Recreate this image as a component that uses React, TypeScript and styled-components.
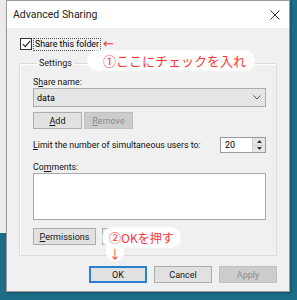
import React from "react";
import styled, { createGlobalStyle, css } from "styled-components";

const Global = createGlobalStyle`
  html, body { margin: 0; padding: 0; }
  body {
    width: 297px;
    height: 300px;
    overflow: hidden;
    font-family: Roboto, "Noto Sans", "Liberation Sans", sans-serif;
    color: #000;
  }
`;

const Desktop = styled.div`
  position: relative;
  width: 297px;
  height: 300px;
  box-sizing: border-box;
  padding-left: 6px;
  background: linear-gradient(#ebebeb, #ebebeb) no-repeat 0 0 / 6px 233px, #1d6c88;
`;

const Dialog = styled.div`
  width: 284px;
  height: 292px;
  box-sizing: border-box;
  border: 1px solid #9c9c9c;
  background: #f0f0f0;
  display: flex;
  flex-direction: column;
  box-shadow: 1px 1px 2px rgba(0, 0, 0, 0.3);
`;

const TitleBar = styled.div`
  height: 27px;
  flex: none;
  background: #fff;
  display: flex;
  align-items: center;
  justify-content: space-between;
  padding-left: 6px;
`;

const Title = styled.span`
  font-size: 10.5px;
  color: #222;
`;

const Close = styled.div`
  width: 24px;
  height: 27px;
  display: flex;
  align-items: center;
  justify-content: center;
  margin-right: 2px;
`;

const Body = styled.div`
  flex: 1;
  display: flex;
  flex-direction: column;
  padding: 10px 12px 0 12px;
`;

const CheckRow = styled.label`
  display: flex;
  align-items: center;
  height: 12px;
  margin-left: 1px;
  font-size: 8.8px;
`;

const CheckBox = styled.span`
  width: 10px;
  height: 10px;
  border: 1px solid #333;
  background: #fff;
  display: flex;
  align-items: center;
  justify-content: center;
`;

const FocusText = styled.span`
  border: 1px dotted #555;
  padding: 0 1px;
  line-height: 11px;
  margin-left: 1px;
`;

const Group = styled.fieldset`
  margin: 7px 0 0 0;
  padding: 7px 10px 10px 13px;
  border: 1px solid #dcdcdc;
  box-shadow: inset 1px 1px 0 #fff;
  min-width: 0;
  display: flex;
  flex-direction: column;
`;

const Legend = styled.legend`
  font-size: 9px;
  line-height: 12px;
  padding: 0 2px;
  margin-left: 4px;
  color: #222;
`;

const Label = styled.div<{ $mt?: number; $h?: number }>`
  font-size: 8.8px;
  line-height: ${(p) => p.$h ?? 12}px;
  height: ${(p) => p.$h ?? 12}px;
  margin-top: ${(p) => p.$mt ?? 0}px;
  color: #111;
  white-space: nowrap;
`;

const U = styled.span`
  text-decoration: underline;
  text-underline-offset: 1px;
`;

const Combo = styled.div`
  height: 19px;
  box-sizing: border-box;
  border: 1px solid #adadad;
  background: #e5e5e5;
  display: flex;
  align-items: center;
  justify-content: space-between;
  padding: 0 4px 0 3px;
  font-size: 9px;
`;

const Row = styled.div<{ $mt: number; $gap?: number }>`
  display: flex;
  align-items: center;
  gap: ${(p) => p.$gap ?? 2}px;
  margin-top: ${(p) => p.$mt}px;
`;

const Button = styled.div<{ $w: number; $disabled?: boolean; $default?: boolean }>`
  width: ${(p) => p.$w}px;
  height: 17px;
  box-sizing: border-box;
  border: 1px solid #adadad;
  background: #e1e1e1;
  font-size: 9px;
  display: flex;
  align-items: center;
  justify-content: center;
  color: #111;
  ${(p) =>
    p.$disabled &&
    css`
      background: #cccccc;
      border-color: #bfbfbf;
      color: #8c8c8c;
    `}
  ${(p) =>
    p.$default &&
    css`
      border: 2px solid #2a7fd4;
    `}
`;

const LimitRow = styled.div`
  display: flex;
  align-items: center;
  justify-content: space-between;
  margin-top: 8px;
  height: 16px;
`;

const Spin = styled.div`
  width: 46px;
  height: 16px;
  box-sizing: border-box;
  border: 1px solid #9a9a9a;
  background: #fff;
  display: flex;
`;

const SpinValue = styled.div`
  flex: 1;
  font-size: 9px;
  line-height: 14px;
  padding-left: 4px;
`;

const SpinButtons = styled.div`
  width: 12px;
  border-left: 1px solid #d0d0d0;
  display: flex;
  flex-direction: column;
  background: #e6e6e6;
`;

const SpinHalf = styled.div`
  flex: 1;
  display: flex;
  align-items: center;
  justify-content: center;
  & + & {
    border-top: 1px solid #cfcfcf;
  }
`;

const TextArea = styled.div`
  height: 47px;
  box-sizing: border-box;
  border: 1px solid #a8a8a8;
  background: #fff;
`;

const Footer = styled.div`
  display: flex;
  justify-content: flex-end;
  gap: 7px;
  margin-top: 10px;
`;

const Bubble = styled.div<{ $x: number; $y: number }>`
  position: absolute;
  left: ${(p) => p.$x}px;
  top: ${(p) => p.$y}px;
  font-family: "Noto Sans CJK JP", "Noto Sans", sans-serif;
  color: #ff3434;
`;

const BubbleText = styled.div<{ $size: number; $pl: number; $pr: number }>`
  background: #fff;
  border-radius: 10px;
  font-size: ${(p) => p.$size}px;
  line-height: 19px;
  padding: 0 ${(p) => p.$pr}px 0 ${(p) => p.$pl}px;
  white-space: nowrap;
  box-shadow: 0 0 2px 1px rgba(255, 255, 255, 0.9);
`;

const ArrowTail = styled.div`
  width: 18px;
  margin-left: 3px;
  background: #fff;
  border-radius: 0 0 8px 8px;
  font-size: 12px;
  line-height: 14px;
  text-align: center;
`;

const SideArrow = styled.div`
  position: absolute;
  left: 103px;
  top: 37px;
  font-size: 13px;
  line-height: 14px;
  color: #ff3434;
  font-family: "DejaVu Sans", sans-serif;
`;

export default function App() {
  return (
    <>
      <Global />
      <Desktop>
        <Dialog>
          <TitleBar>
            <Title>Advanced Sharing</Title>
            <Close>
              <svg width="10" height="10" viewBox="0 0 10 10">
                <path d="M0.5 0.5 L9.5 9.5 M9.5 0.5 L0.5 9.5" stroke="#333" strokeWidth="1" />
              </svg>
            </Close>
          </TitleBar>
          <Body>
            <CheckRow>
              <CheckBox>
                <svg width="9" height="8" viewBox="0 0 9 8">
                  <path d="M0.8 4.2 L3.3 6.6 L8.3 0.8" stroke="#222" strokeWidth="1.1" fill="none" />
                </svg>
              </CheckBox>
              <FocusText>Share this folder</FocusText>
            </CheckRow>
            <Group>
              <Legend>Settings</Legend>
              <Label>
                S<U>h</U>are name:
              </Label>
              <Combo>
                <span>data</span>
                <svg width="8" height="5" viewBox="0 0 8 5">
                  <path d="M0.5 0.5 L4 4 L7.5 0.5" stroke="#555" strokeWidth="1" fill="none" />
                </svg>
              </Combo>
              <Row $mt={5}>
                <Button $w={49}>
                  <U>A</U>dd
                </Button>
                <Button $w={49} $disabled>
                  <U>R</U>emove
                </Button>
              </Row>
              <LimitRow>
                <Label>
                  <U>L</U>imit the number of simultaneous users to:
                </Label>
                <Spin>
                  <SpinValue>20</SpinValue>
                  <SpinButtons>
                    <SpinHalf>
                      <svg width="5" height="3" viewBox="0 0 5 3">
                        <path d="M0 3 L2.5 0 L5 3 Z" fill="#333" />
                      </svg>
                    </SpinHalf>
                    <SpinHalf>
                      <svg width="5" height="3" viewBox="0 0 5 3">
                        <path d="M0 0 L2.5 3 L5 0 Z" fill="#333" />
                      </svg>
                    </SpinHalf>
                  </SpinButtons>
                </Spin>
              </LimitRow>
              <Label $mt={9} $h={11}>
                Co<U>m</U>ments:
              </Label>
              <TextArea />
              <Row $mt={8} $gap={6}>
                <Button $w={63}>
                  <U>P</U>ermissions
                </Button>
                <Button $w={64} />
              </Row>
            </Group>
            <Footer>
              <Button $w={58} $default>
                OK
              </Button>
              <Button $w={58}>Cancel</Button>
              <Button $w={58} $disabled>
                Apply
              </Button>
            </Footer>
          </Body>
        </Dialog>
        <SideArrow>←</SideArrow>
        <Bubble $x={88} $y={51}>
          <BubbleText $size={13} $pl={15} $pr={8}>
            ①ここにチェックを入れ
          </BubbleText>
        </Bubble>
        <Bubble $x={103} $y={228}>
          <BubbleText $size={12} $pl={6} $pr={6}>
            ②OKを押す
          </BubbleText>
          <ArrowTail>↓</ArrowTail>
        </Bubble>
      </Desktop>
    </>
  );
}
